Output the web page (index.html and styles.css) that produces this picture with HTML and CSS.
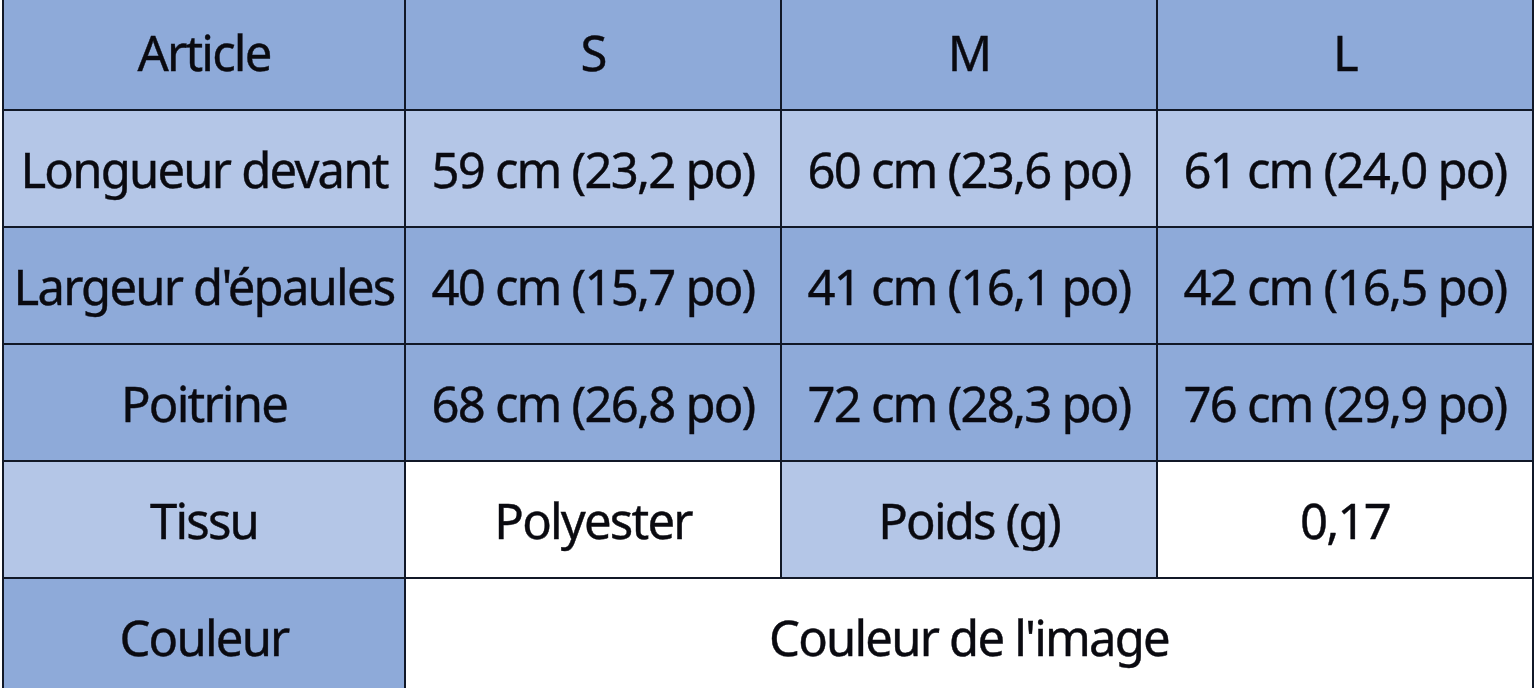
FILE: index.html
```html
<!DOCTYPE html>
<html lang="fr">
<head>
<meta charset="utf-8">
<title>Tableau des tailles</title>
<link rel="stylesheet" href="styles.css">
</head>
<body>
<div class="chart">
  <div class="cell dark">Article</div>
  <div class="cell dark">S</div>
  <div class="cell dark">M</div>
  <div class="cell dark">L</div>

  <div class="cell light">Longueur devant</div>
  <div class="cell light">59 cm (23,2 po)</div>
  <div class="cell light">60 cm (23,6 po)</div>
  <div class="cell light">61 cm (24,0 po)</div>

  <div class="cell dark">Largeur d'épaules</div>
  <div class="cell dark">40 cm (15,7 po)</div>
  <div class="cell dark">41 cm (16,1 po)</div>
  <div class="cell dark">42 cm (16,5 po)</div>

  <div class="cell dark">Poitrine</div>
  <div class="cell dark">68 cm (26,8 po)</div>
  <div class="cell dark">72 cm (28,3 po)</div>
  <div class="cell dark">76 cm (29,9 po)</div>

  <div class="cell light">Tissu</div>
  <div class="cell white">Polyester</div>
  <div class="cell light">Poids (g)</div>
  <div class="cell white">0,17</div>

  <div class="cell dark">Couleur</div>
  <div class="cell white span3">Couleur de l'image</div>
</div>
</body>
</html>
```
FILE: styles.css
```css
html, body {
  margin: 0;
  padding: 0;
  background: #ffffff;
  overflow: hidden;
}

.chart {
  display: grid;
  grid-template-columns: 400px 374px 374px 374px;
  grid-auto-rows: 115px;
  gap: 2px;
  padding: 2px;
  width: max-content;
  margin: -8px 0 0 2px;
  background: #111827;
  font-family: "Noto Sans", "Open Sans", sans-serif;
  font-size: 49px;
  letter-spacing: -1.8px;
  color: #0a0a10;
  -webkit-text-stroke: 0.4px #0a0a10;
}

.cell {
  display: flex;
  align-items: center;
  justify-content: center;
  white-space: nowrap;
}

.dark { background: #8eaad9; }
.light { background: #b4c6e7; }
.white { background: #ffffff; }
.span3 { grid-column: span 3; }
```
